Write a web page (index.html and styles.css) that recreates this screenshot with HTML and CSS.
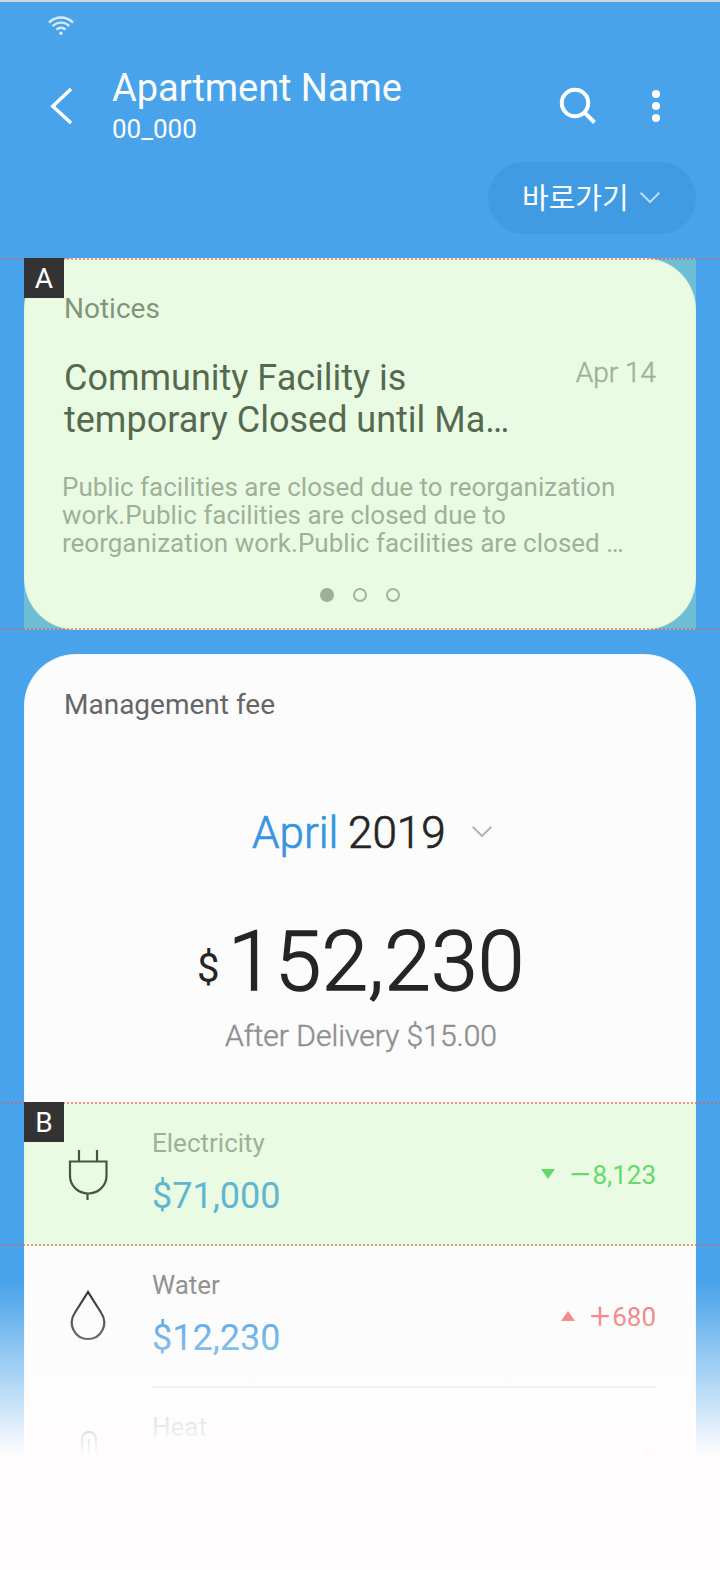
FILE: index.html
```html
<!DOCTYPE html>
<html lang="en">
<head>
<meta charset="utf-8">
<title>Apartment</title>
<link rel="stylesheet" href="styles.css">
</head>
<body>
<div class="screen">
  <div class="status">
    <svg class="wifi" width="26" height="20" viewBox="0 0 26 20" fill="none" stroke="#fff" stroke-width="2.4">
      <path d="M1 6.6C7.6-.3 18.400-.3 25 6.600M4.700 10.200C9.300 5.400 16.700 5.400 21.300 10.200M8.400 13.700C11 11 15 11 17.600 13.700"/>
      <circle cx="13" cy="17.300" r="1.700" fill="#fff" stroke="none"/>
    </svg>
  </div>
  <header class="header">
    <svg class="back" width="24" height="38" viewBox="0 0 24 38" fill="none" stroke="#fff" stroke-width="3.500"><path d="M21 2 2.800 19.200 21 36"/></svg>
    <div class="names">
      <h1 class="title">Apartment Name</h1>
      <div class="unit">00_000</div>
    </div>
    <svg class="search" width="38" height="38" viewBox="0 0 38 38" fill="none" stroke="#fff" stroke-width="4"><circle cx="16" cy="16" r="13.200"/><path d="M25.500 25.500 35.500 35.500"/></svg>
    <svg class="more" width="8" height="32" viewBox="0 0 8 32" fill="#fff"><circle cx="4" cy="4" r="4"/><circle cx="4" cy="16" r="4"/><circle cx="4" cy="28" r="4"/></svg>
  </header>
  <div class="actions">
    <div class="pill"><span class="pill-text">바로가기</span>
      <svg width="20" height="12" viewBox="0 0 20 12" fill="none" stroke="#fff" stroke-opacity=".65" stroke-width="2"><path d="M.7.800 10 10 19.300.800"/></svg>
    </div>
  </div>

  <section class="notice marked">
    <div class="card notice-card">
      <h2 class="label">Notices</h2>
      <div class="headline-row">
        <div class="headline">Community Facility is<br>temporary Closed until Ma…</div>
        <div class="date">Apr 14</div>
      </div>
      <p class="body">Public facilities are closed due to reorganization<br>work.Public facilities are closed due to<br>reorganization work.Public facilities are closed …</p>
      <div class="dots"><i class="dot on"></i><i class="dot"></i><i class="dot"></i></div>
    </div>
    <div class="tint"></div>
    <b class="badge">A</b>
  </section>

  <section class="card fee-card">
    <h2 class="label">Management fee</h2>
    <div class="month"><span class="month-name">April</span><span class="year">2019</span>
      <svg width="20" height="12" viewBox="0 0 20 12" fill="none" stroke="#b4b4b4" stroke-width="2"><path d="M.7.800 10 10 19.300.800"/></svg>
    </div>
    <div class="total"><span class="currency">$</span><span class="amount">152,230</span></div>
    <div class="after">After Delivery $15.00</div>

    <div class="row marked">
      <svg class="icon" width="48" height="52" viewBox="0 0 48 52" fill="none" stroke="#080c08" stroke-width="2.200"><path d="M15 0V11M33 0V11M6 11.500H42.500V26A18.250 17.500 0 0 1 6 26ZM23.500 43V50"/></svg>
      <div class="item"><div class="kind">Electricity</div><div class="price">$71,000</div></div>
      <div class="change down"><svg width="14" height="10" viewBox="0 0 14 10"><path fill="currentColor" d="M0 0H14L7 10Z"/></svg><span class="sign minus">−</span><span>8,123</span></div>
      <div class="tint"></div>
      <b class="badge">B</b>
    </div>
    <div class="row water">
      <svg class="icon" width="48" height="52" viewBox="0 0 48 52" fill="none" stroke="#252525" stroke-width="2.200"><path d="M24 2 11 22.500C3 34.500 11 49 24 49S45 34.500 37 22.500Z"/></svg>
      <div class="details">
        <div class="item"><div class="kind">Water</div><div class="price">$12,230</div></div>
        <div class="change up"><svg width="14" height="10" viewBox="0 0 14 10"><path fill="currentColor" d="M0 10H14L7 0Z"/></svg><span class="sign">+</span><span>680</span></div>
      </div>
    </div>
    <div class="row heat">
      <svg class="icon" width="48" height="52" viewBox="0 0 48 52" fill="none" stroke="#252525" stroke-width="2.200"><path d="M18 36V8A7 7 0 0 1 32 8V36M25 8V36"/></svg>
      <div class="item"><div class="kind">Heat</div></div>
      <div class="change none"><span>0</span></div>
    </div>
  </section>
  <div class="fade"></div>
</div>
</body>
</html>
```
FILE: styles.css
```css
* { box-sizing: border-box; }
body { margin: 0; background: #fffdfe; font-family: Roboto, "Noto Sans CJK KR", sans-serif; }
svg { display: block; flex: none; }
h1, h2, p { margin: 0; font-weight: 400; }

.screen {
  position: relative;
  width: 720px;
  height: 1570px;
  overflow: hidden;
  background: #48a3ea;
  border-top: 2px solid #d3d7da;
  padding: 0 24px;
}
.status { height: 58px; padding: 14px 0 0 24px; }
.wifi { opacity: .78; }

.header { display: flex; height: 102px; padding: 0 36px 0 26px; color: #fcfcfc; }
.back { margin-top: 27px; }
.names { flex: 1; padding-left: 38px; }
.title { font-size: 38px; line-height: 44px; margin-top: 6px; letter-spacing: -.05px; white-space: nowrap; }
.unit { font-size: 26px; line-height: 30px; margin-top: 4px; }
.search { margin: 27px 55px 0 0; }
.more { margin-top: 30px; }

.actions { display: flex; justify-content: flex-end; height: 96px; }
.pill {
  display: flex;
  align-items: center;
  justify-content: space-between;
  width: 208px;
  height: 72px;
  padding: 0 36px 0 34px;
  border-radius: 36px;
  background: #409be3;
  color: #fff;
}
.pill-text { font: 29px/40px "Noto Sans CJK KR", sans-serif; margin-bottom: 5px; }

.card { background: #fcfcfc; box-shadow: inset 0 0 0 1px rgba(0, 0, 0, .035); }
.label { font-size: 28px; line-height: 32px; color: #666; }

/* Highlighted regions: translucent tint with dotted guides above and below */
.marked { position: relative; }
.tint { position: absolute; inset: 0; background: rgba(192, 253, 172, .317); }
.marked::before, .marked::after {
  content: "";
  position: absolute;
  z-index: 1;
  left: -21px;
  right: -24px;
  height: 2px;
  background: repeating-linear-gradient(90deg, rgba(247, 78, 70, .58) 0 2px, transparent 2px 4px);
}
.marked::before { top: 0; }
.marked::after { bottom: 0; }
.badge {
  position: absolute;
  z-index: 2;
  left: 0;
  top: 0;
  width: 40px;
  height: 40px;
  background: #333;
  color: #fff;
  font-size: 28px;
  font-weight: 400;
  line-height: 41px;
  text-align: center;
}

.notice { height: 372px; }
.notice-card { height: 372px; border-radius: 52px; padding: 35px 40px 0; }
.headline-row { display: flex; justify-content: space-between; margin-top: 32px; }
.headline { font-size: 36px; line-height: 42px; color: #252525; white-space: nowrap; }
.date { font-size: 28px; font-weight: 300; line-height: 32px; color: #8f8f8f; -webkit-text-stroke: .5px; }
.body { margin: 32px 0 0 -2px; font-size: 26px; line-height: 28px; color: #8f8f8f; white-space: nowrap; }
.dots { display: flex; justify-content: center; gap: 19px; margin-top: 31px; }
.dot { width: 14px; height: 14px; border: 2px solid #8f8f8f; border-radius: 50%; opacity: .95; }
.dot.on { background: #8f8f8f; opacity: 1; }

.fee-card { margin-top: 24px; height: 940px; border-radius: 52px 52px 0 0; padding-top: 35px; }
.fee-card > .label { padding-left: 40px; }
.month { display: flex; align-items: center; margin: 86px 0 0 228px; height: 52px; font-size: 44px; font-weight: 300; line-height: 52px; color: #252525; -webkit-text-stroke: .7px; }
.month svg { margin-bottom: 2px; }
.month-name { color: #3795df; width: 96px; }
.year { width: 124px; }
.total { display: flex; align-items: baseline; height: 98px; margin-top: 54px; padding-left: 173px; line-height: 98px; color: #252525; }
.currency { position: relative; top: -8px; width: 31px; font-size: 40px; }
.amount { font-size: 84px; font-weight: 300; letter-spacing: .1px; -webkit-text-stroke: 1.400px; }
.after { font-size: 30px; font-weight: 300; line-height: 36px; margin: 7px -2px 0 0; text-align: center; color: #8f8f8f; -webkit-text-stroke: .5px; }

.row { display: flex; height: 142px; padding: 0 40px; }
.row.marked { height: 144px; margin-top: 48px; margin-bottom: -2px; }
.icon { margin-top: 48px; }
.item { flex: 1; margin-left: 40px; padding-top: 25px; }
.kind { font-size: 26px; line-height: 32px; color: #8f8f8f; }
.price { font-size: 36px; line-height: 42px; margin-top: 16px; color: #3795df; }
.change { display: flex; align-items: center; height: 32px; margin-top: 57px; font-size: 26px; }
.change svg { margin-bottom: 2px; }
.sign { width: 22px; font-weight: 300; font-size: 35px; line-height: 32px; margin-left: 15px; -webkit-text-stroke: .3px; }
.minus { width: 24px; margin-left: 13px; font-size: 41px; }
.down { color: #3cc74e; }
.up { color: #ef7070; }
.none { color: #8f8f8f; }
.details { display: flex; flex: 1; height: 144px; margin-left: 40px; border-bottom: 2px solid #dedede; }
.details .item { margin-left: 0; }
.water .icon { margin-top: 46px; }
.heat .icon { margin-top: 45px; }
.heat .change { margin-top: 57px; }

.fade {
  position: absolute;
  left: 0;
  right: 0;
  top: 1280px;
  height: 290px;
  z-index: 5;
  background: linear-gradient(rgba(255, 253, 254, 0), #fffdfe 174px);
}
```
